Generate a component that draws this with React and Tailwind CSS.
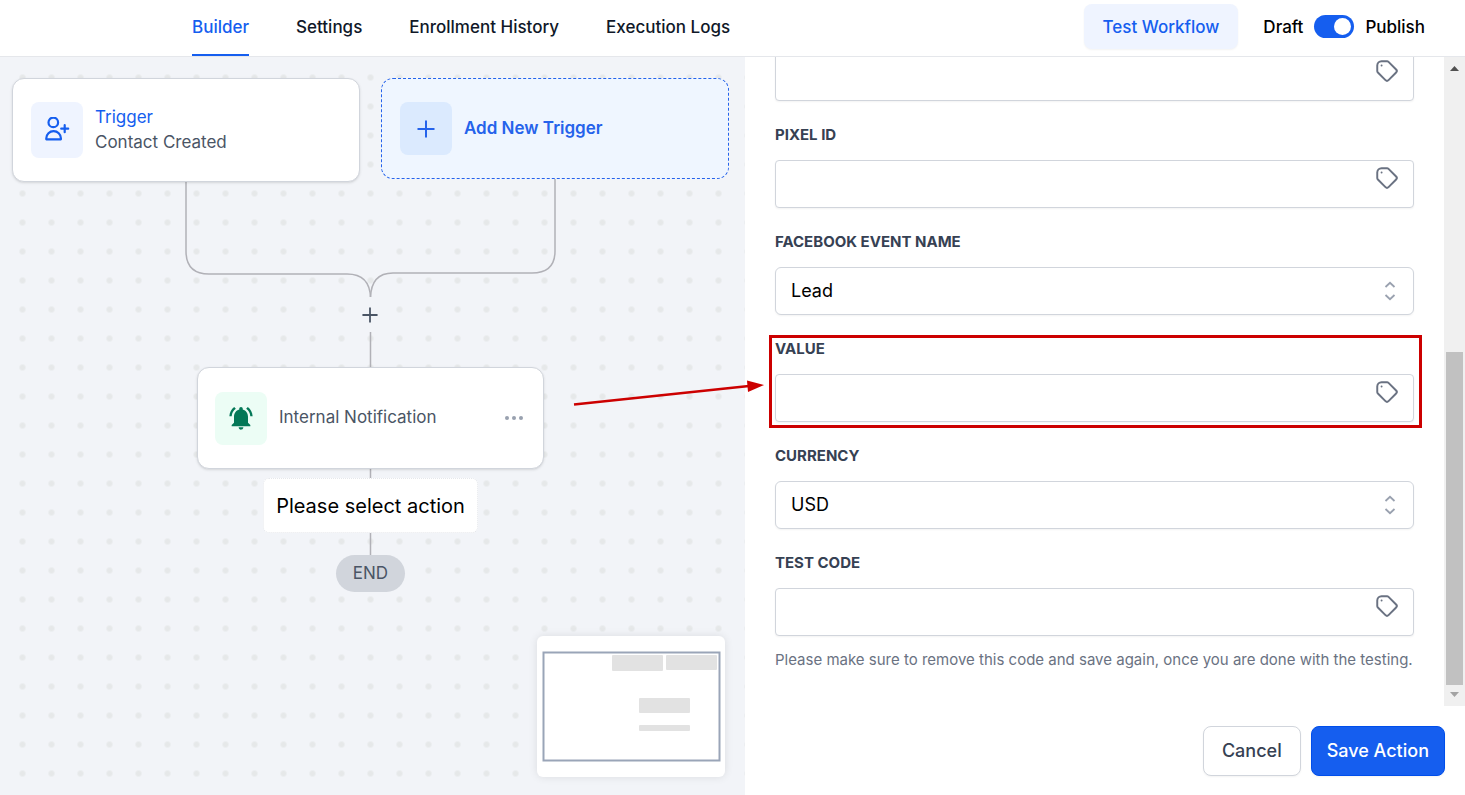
import { useState } from 'react';
import { MdNotificationsActive } from 'react-icons/md';

const TABS = ['Builder', 'Settings', 'Enrollment History', 'Execution Logs'];

function TagIcon() {
    return (
        <svg viewBox="0 0 24 24" className="w-[26px] h-[26px]" fill="none" stroke="currentColor" strokeWidth="1.8" strokeLinecap="round" strokeLinejoin="round">
            <path d="M7 7h.01M7 3h5c.512 0 1.024.195 1.414.586l7 7a2 2 0 010 2.828l-7 7a2 2 0 01-2.828 0l-7-7A2 2 0 013 12V7a4 4 0 014-4z" />
        </svg>
    );
}

function UserPlusIcon() {
    return (
        <svg viewBox="0 0 26 26" className="w-[26px] h-[26px]" fill="none" stroke="currentColor" strokeWidth="2.2" strokeLinecap="round" strokeLinejoin="round">
            <circle cx="9.3" cy="5.4" r="4.8" />
            <path d="M2.3 22.3v-1a7.3 7.2 0 0 1 14.6 0v1z" />
            <path d="M20.7 8.200v7M17.200 11.700h7" />
        </svg>
    );
}

function PlusIcon({ className }) {
    return (
        <svg viewBox="0 0 18 18" className={className} fill="none" stroke="currentColor" strokeWidth="2">
            <path d="M9 0.5v17M0.5 9h17" />
        </svg>
    );
}

function Field({ id, label, hint, highlighted, children }) {
    return (
        <div className="relative shrink-0 mt-6">
            {label && (
                <label htmlFor={id} className="block mb-[15px] text-[15px] leading-5 font-bold uppercase text-gray-700">
                    {label}
                </label>
            )}
            {children}
            {hint && <p className="mt-3 text-[15px] leading-6 text-gray-500">{hint}</p>}
            {highlighted && (
                <div className="absolute -left-[6px] -right-[8px] -top-1 -bottom-[6px] border-3 border-[#cc0000] pointer-events-none" />
            )}
        </div>
    );
}

function TagInput({ id, ...rest }) {
    return (
        <div className="relative">
            <input id={id} type="text" className="block w-full h-12 pl-4 pr-12 rounded-sm border border-gray-300 bg-white text-lg shadow-xs" {...rest} />
            <button type="button" aria-label="Insert custom value" className="absolute right-[14px] top-[5px] text-gray-500">
                <TagIcon />
            </button>
        </div>
    );
}

function SelectBox({ id, options }) {
    return (
        <div className="relative">
            <select id={id} className="block appearance-none w-full h-12 px-[15px] rounded-md border border-gray-300 bg-white text-lg text-black shadow-xs">
                {options.map((o) => <option key={o}>{o}</option>)}
            </select>
            <svg viewBox="0 0 12 20" className="absolute right-[18px] top-[14px] w-3 h-5 text-gray-400 pointer-events-none" fill="none" stroke="currentColor" strokeWidth="1.8">
                <path d="M1.500 6 6 1.800 10.500 6M1.500 14 6 18.200 10.500 14" />
            </svg>
        </div>
    );
}

function Canvas() {
    return (
        <section className="relative flex-1 min-w-0 overflow-hidden bg-[#f2f4f8] bg-[radial-gradient(circle,#e6e8e9_2px,transparent_4px)] bg-size-[29px_29px] bg-position-[8px_6px]">
            {/* Connectors between the nodes */}
            <svg className="absolute left-0 top-0 w-[745px] h-[600px]" fill="none" stroke="#b1b1b7" strokeWidth="1.5">
                <path d="M186 124V194Q186 217 209 217H347Q370 217 370.500 241" />
                <path d="M555 122V194Q555 216 532 216H393Q371 216 370.500 241" />
                <path d="M370.500 275V498" />
            </svg>

            <div className="absolute left-[12px] top-[21px] w-[348px] h-[104px] flex items-center gap-3 px-[18px] bg-white rounded-xl border border-gray-300 shadow-sm">
                <div className="w-[52px] h-[56px] rounded-lg bg-[#eff4ff] text-[#155eef] flex items-center justify-center">
                    <UserPlusIcon />
                </div>
                <div className="text-[17px] leading-[25px]">
                    <div className="text-[#155eef]">Trigger</div>
                    <div className="text-gray-600">Contact Created</div>
                </div>
            </div>

            <button className="absolute left-[381px] top-[21px] w-[348px] h-[101px] flex items-center gap-3 px-[18px] bg-[#eff6ff] rounded-xl border border-dashed border-[#2563eb]">
                <span className="w-[52px] h-[53px] rounded-lg bg-[#dbeafe] text-[#2563eb] flex items-center justify-center">
                    <PlusIcon className="w-[18px] h-[18px]" />
                </span>
                <span className="text-[17px] font-semibold text-[#2563eb]">Add New Trigger</span>
            </button>

            <button aria-label="Add step" className="absolute left-[355px] top-[240px] w-[30px] h-[35px] flex items-center justify-center bg-[#f2f4f8] text-gray-600">
                <PlusIcon className="w-4 h-4" />
            </button>

            <div className="absolute left-[197px] top-[310px] w-[347px] h-[102px] flex items-center gap-3 px-[17px] bg-white rounded-xl border border-gray-300 shadow-sm">
                <div className="w-[52px] h-[53px] rounded-lg bg-[#ecfdf5] text-[#047857] flex items-center justify-center">
                    <MdNotificationsActive className="w-[28px] h-[28px]" />
                </div>
                <span className="flex-1 text-[17px] text-gray-600">Internal Notification</span>
                <button aria-label="More" className="text-gray-400">
                    <svg viewBox="0 0 22 6" className="w-[22px] h-[6px]" fill="currentColor">
                        <circle cx="3" cy="3" r="2" />
                        <circle cx="10" cy="3" r="2" />
                        <circle cx="17" cy="3" r="2" />
                    </svg>
                </button>
            </div>

            <div className="absolute left-[263px] top-[421px] w-[215px] h-[55px] flex items-center justify-center bg-white rounded-md border border-dotted border-gray-200 text-xl text-black whitespace-nowrap">
                Please select action
            </div>
            <div className="absolute left-[336px] top-[498px] w-[69px] h-[37px] flex items-center justify-center rounded-full bg-gray-300 text-[17px] text-gray-600">
                END
            </div>

            {/* Minimap */}
            <svg viewBox="0 0 188 141" className="absolute right-[20px] bottom-[18px] w-[188px] h-[141px] bg-white rounded-md shadow-[0_0_8px_rgba(0,0,0,0.1)]">
                <rect x="6.500" y="16.500" width="176" height="108" fill="none" stroke="#9aa5b8" strokeWidth="2" />
                <g fill="#e2e2e2">
                    <rect x="75" y="19" width="51" height="16" rx="1" />
                    <rect x="129" y="19" width="51" height="15" rx="1" />
                    <rect x="102" y="62" width="51" height="15" rx="1" />
                    <rect x="102" y="89" width="51" height="6" rx="1" />
                </g>
            </svg>
        </section>
    );
}

function ScrollBar() {
    return (
        <div className="w-[21px] shrink-0 flex flex-col items-center bg-[#f0f0f0]">
            <svg viewBox="0 0 9 5" className="mt-[9px] w-[9px] h-[5px]" fill="#505050"><path d="M0 5 4.500 0 9 5z" /></svg>
            <div className="flex-1" />
            <div className="w-[17px] h-[333px] bg-[#c1c1c1]" />
            <svg viewBox="0 0 9 5" className="mt-[7px] mb-[9px] w-[9px] h-[5px]" fill="#a3a3a3"><path d="M0 0 4.500 5 9 0z" /></svg>
        </div>
    );
}

export default function App() {
    const [tab, setTab] = useState('Builder');
    const [published, setPublished] = useState(true);

    return (
        <div className="h-screen flex flex-col bg-white font-['Inter',sans-serif]">
            <header className="h-[57px] shrink-0 flex justify-between border-b border-gray-200 pl-48 pr-10">
                <nav className="flex gap-[47px]">
                    {TABS.map((t) => (
                        <a
                            key={t}
                            href="#"
                            onClick={() => setTab(t)}
                            className={`flex items-center pt-0.5 text-[17px] font-medium border-b-2 ${t === tab ? "text-[#155eef] border-[#155eef]" : "text-gray-900 border-transparent"}`}
                        >
                            {t}
                        </a>
                    ))}
                </nav>
                <div className="flex items-center pb-[3px] text-[17px] leading-7 font-medium text-black">
                    <button className="h-[45px] px-[19px] mr-[25px] rounded-lg bg-[#eff4ff] text-[#155eef] shadow-xs">Test Workflow</button>
                    <label className="flex items-center gap-[11px]">
                        Draft
                        <input
                            type="checkbox"
                            checked={published}
                            onChange={(e) => setPublished(e.target.checked)}
                            className="appearance-none flex items-center w-10 h-[23px] px-[3px] rounded-full bg-gray-300 checked:bg-[#155eef] checked:justify-end before:content-[''] before:w-[17px] before:h-[17px] before:rounded-full before:bg-white"
                        />
                        Publish
                    </label>
                </div>
            </header>

            <main className="relative flex-1 min-h-0 flex">
                <Canvas />

                <aside className="relative w-[720px] shrink-0 flex flex-col">
                    <div className="flex-1 min-h-0 flex">
                        <form className="flex-1 min-w-0 flex flex-col justify-end overflow-hidden px-[30px] pb-[34px]">
                            <Field>
                                <TagInput id="token" aria-label="Access token" />
                            </Field>
                            <Field id="pixel" label="Pixel ID"><TagInput id="pixel" /></Field>
                            <Field id="event" label="Facebook Event Name"><SelectBox id="event" options={['Lead', 'Purchase']} /></Field>
                            <Field id="value" label="Value" highlighted><TagInput id="value" /></Field>
                            <Field id="currency" label="Currency"><SelectBox id="currency" options={['USD', 'EUR']} /></Field>
                            <Field id="code" label="Test Code" hint="Please make sure to remove this code and save again, once you are done with the testing.">
                                <TagInput id="code" />
                            </Field>
                        </form>
                        <ScrollBar />
                    </div>

                    <div className="h-[89px] shrink-0 flex items-center justify-end gap-[10px] pr-5 text-lg font-medium">
                        <button className="h-[50px] px-[18px] rounded-lg border border-gray-300 bg-white text-gray-700 shadow-xs">Cancel</button>
                        <button className="h-[50px] px-[15px] rounded-lg border border-[#004eeb] bg-[#155eef] text-white shadow-xs">Save Action</button>
                    </div>

                    {/* Arrow pointing at the value field */}
                    <svg viewBox="0 0 192 26" className="absolute -left-[172px] top-[323px] w-[192px] h-[26px] pointer-events-none">
                        <path d="M1 24.500 176 6" stroke="#cc0000" strokeWidth="2.500" />
                        <path d="M174 0.500 191 5 175 12z" fill="#cc0000" />
                    </svg>
                </aside>
            </main>
        </div>
    );
}
